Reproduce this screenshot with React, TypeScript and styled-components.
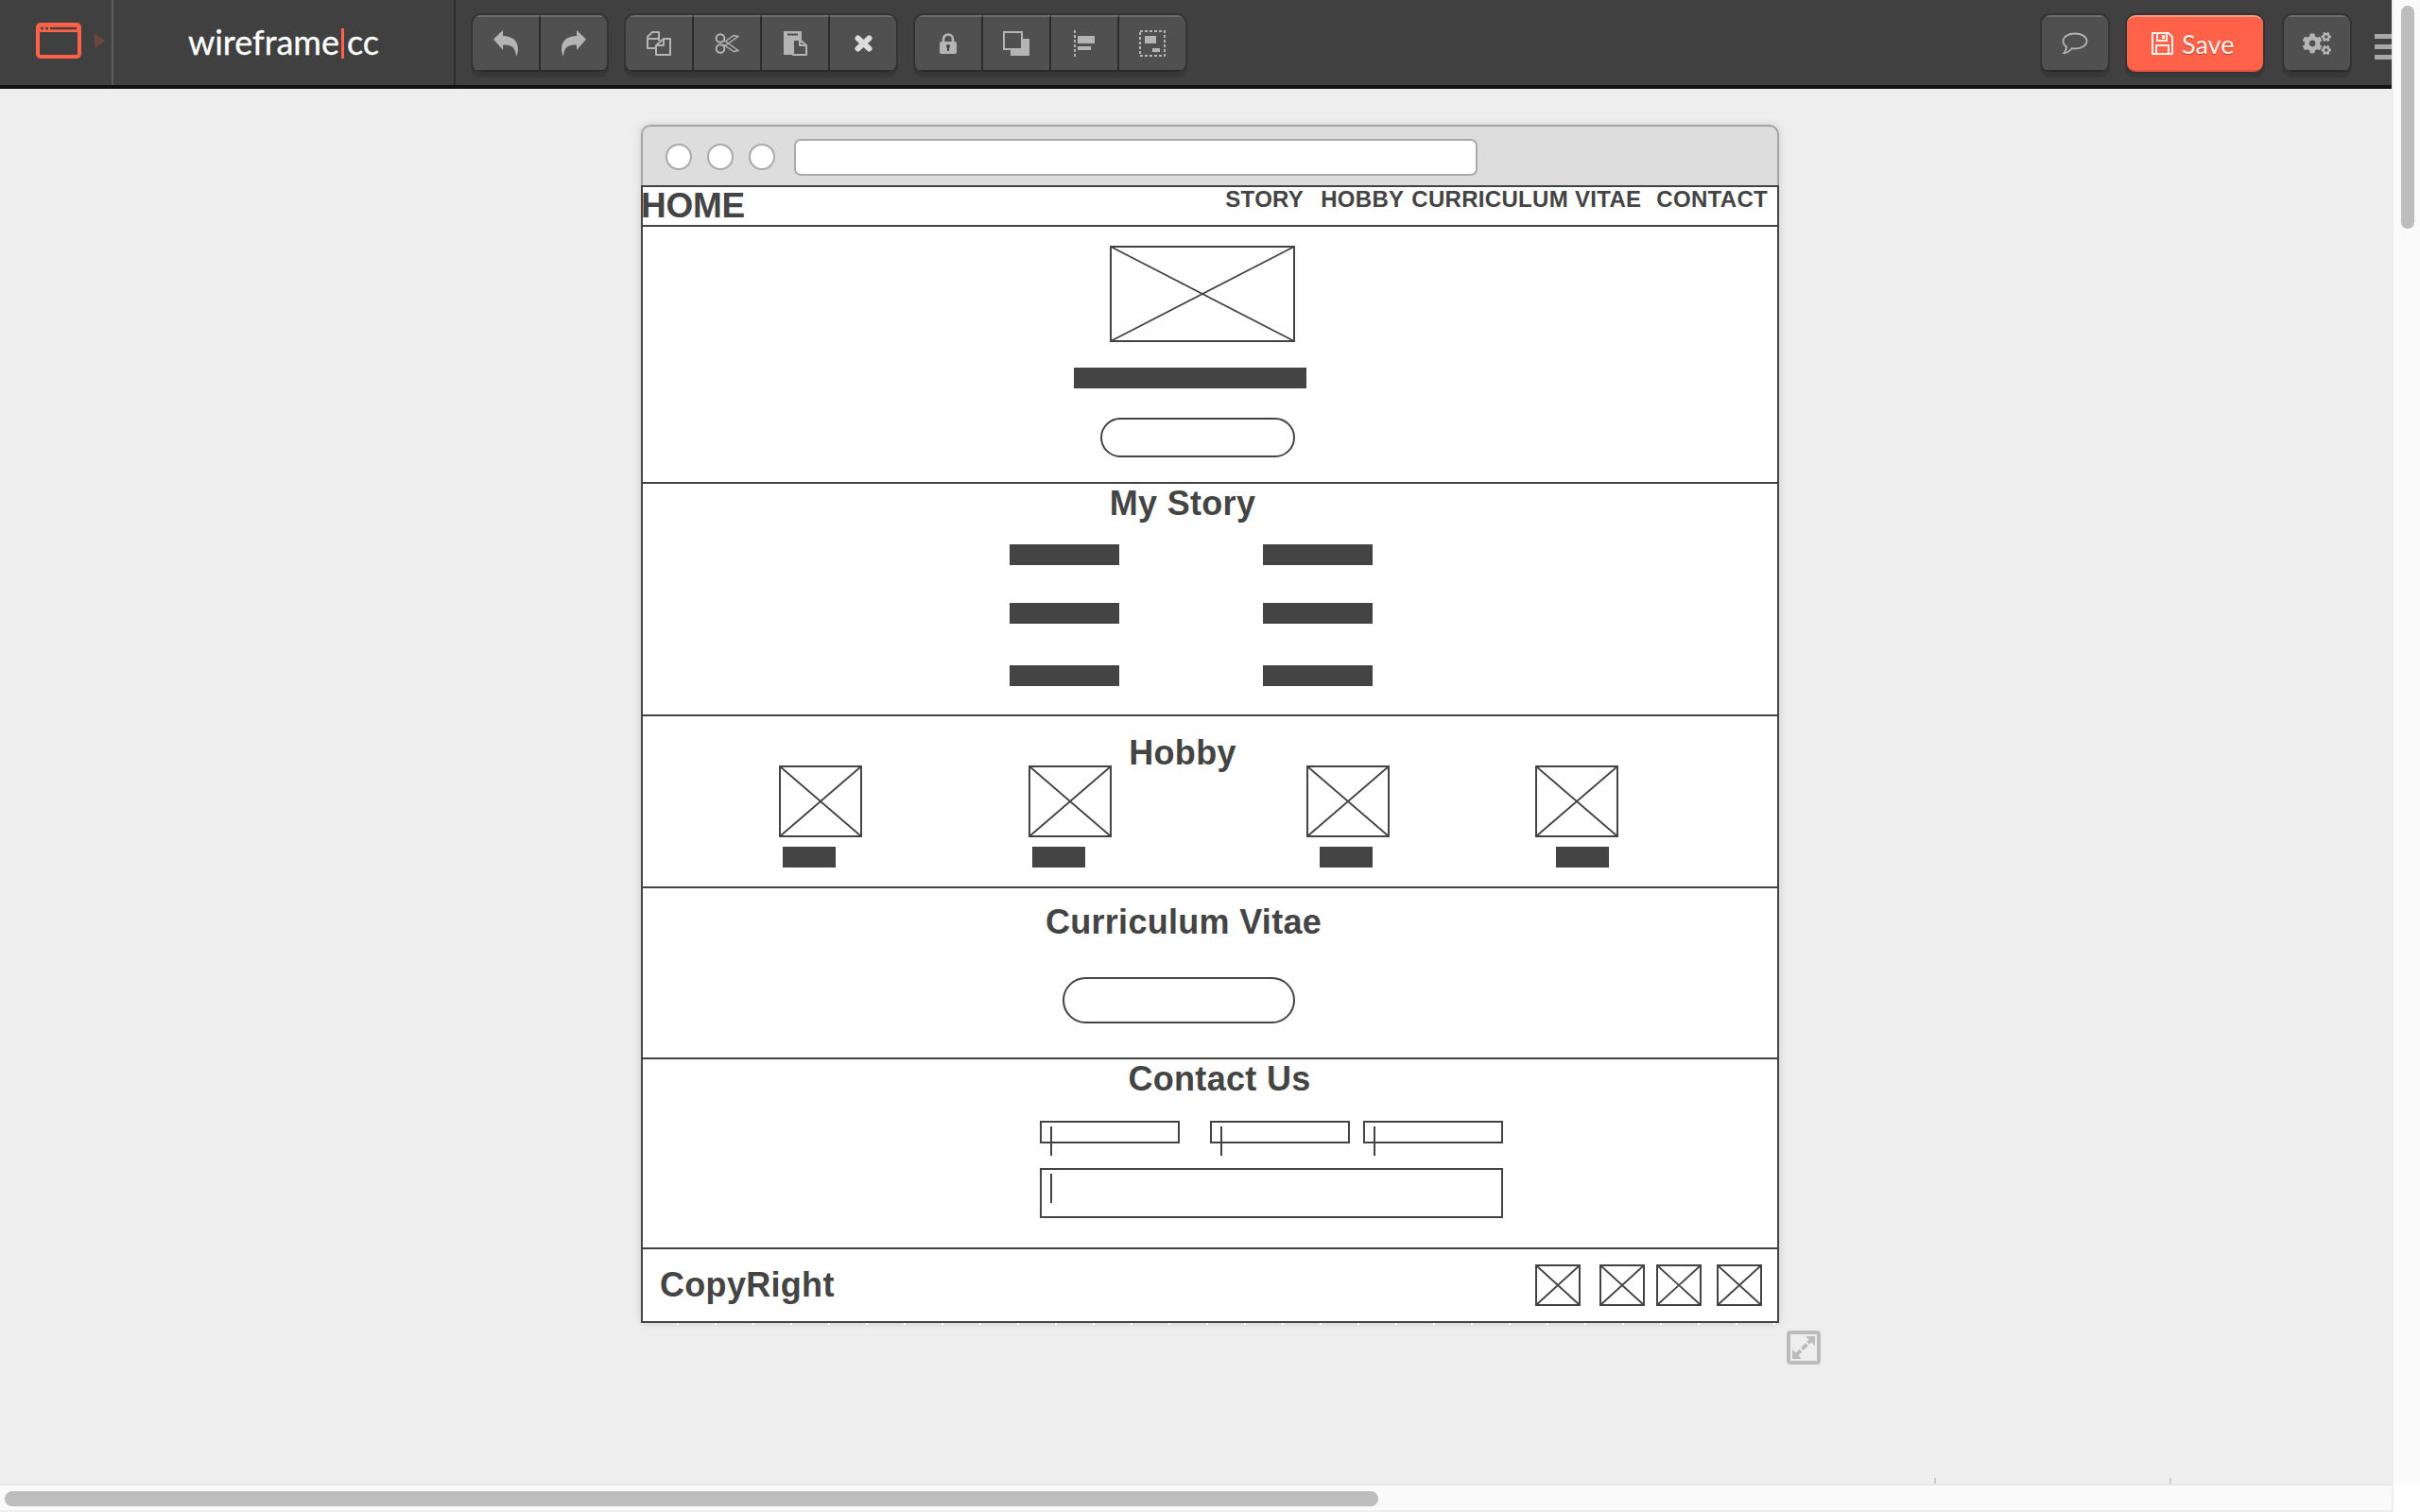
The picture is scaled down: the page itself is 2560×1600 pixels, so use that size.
import React from 'react';
import styled, { createGlobalStyle } from 'styled-components';
import { FaCogs } from 'react-icons/fa';

const INK = '#444';
const SANS = '"Liberation Sans", Arial, sans-serif';

const GlobalStyle = createGlobalStyle`
  html, body {
    margin: 0;
    padding: 0;
    height: 100%;
    overflow: hidden;
    background: #eee;
  }
  * {
    box-sizing: border-box;
  }
`;

const Page = styled.div`
  display: grid;
  grid-template-columns: 2530px 30px;
  width: 2560px;
  height: 1600px;
`;

const Workspace = styled.div`
  display: flex;
  flex-direction: column;
  min-width: 0;
  height: 1600px;
`;

/* ---- top toolbar ---- */
const TopBar = styled.header`
  display: flex;
  align-items: flex-start;
  flex: none;
  height: 94px;
  background: #404040;
  border-bottom: 4px solid #121212;
`;

const AppMenu = styled.div`
  display: flex;
  align-items: center;
  gap: 14px;
  width: 120px;
  height: 90px;
  padding: 0 0 4px 38px;
  border-right: 2px solid #5b5b5b;
`;

const MenuCaret = styled.span`
  width: 0;
  height: 0;
  border-left: 11px solid #6e463c;
  border-top: 8px solid transparent;
  border-bottom: 8px solid transparent;
`;

const LogoBlock = styled.div`
  display: flex;
  align-items: center;
  justify-content: center;
  width: 362px;
  height: 90px;
  padding-bottom: 2px;
  border-right: 2px solid #2c2c2c;
  color: #fff;
  font: 400 36px Lato, sans-serif;
  -webkit-text-stroke: 0.3px #fff;
`;

const LogoPipe = styled.span`
  display: inline-block;
  width: 3px;
  height: 32px;
  margin: 4px 3px 0 2px;
  background: #ff6248;
`;

const ToolGroup = styled.div`
  display: flex;
  height: 60px;
  margin: 16px 0 0 ${(p: { $gap: number }) => p.$gap}px;
  border-radius: 9px;
  box-shadow: 0 0 0 2px #343434, 0 4px 0 2px #383838;
  overflow: hidden;
  flex: none;
`;

const ToolButton = styled.button<{ $width?: number }>`
  display: flex;
  align-items: center;
  justify-content: center;
  width: ${(p) => p.$width ?? 72}px;
  height: 60px;
  padding: 0;
  border: 0;
  border-right: 2px solid #2b2b2b;
  border-top: 2px solid #6d6d6d;
  border-bottom: 2px solid #2a2a2a;
  background: #505050;
  color: #b4b4b4;
  &:last-child {
    border-right: 0;
  }
`;

const Spacer = styled.div`
  flex: 1;
`;

const SaveButton = styled.button`
  display: flex;
  align-items: center;
  gap: 9px;
  flex: none;
  width: 144px;
  height: 60px;
  margin: 16px 0 0 20px;
  padding: 0 0 0 26px;
  border: 0;
  border-top: 2px solid #ff9c88;
  border-bottom: 2px solid #e5533c;
  border-radius: 9px;
  background: #ff6248;
  box-shadow: 0 0 0 2px #343434, 0 4px 0 2px #383838;
  color: #f6f0ee;
  font: 400 27px Lato, sans-serif;
  text-shadow: 0 1px 1px rgba(120, 40, 20, 0.6);
`;

const MenuLines = styled.div`
  display: flex;
  flex-direction: column;
  gap: 6px;
  flex: none;
  width: 18px;
  margin: 36px 0 0 26px;
  & > span {
    height: 5px;
    background: #a8a8a8;
  }
`;

/* ---- canvas ---- */
const Canvas = styled.main`
  position: relative;
  flex: 1;
  padding: 38px 0 0 678px;
  background: #eee;
`;

const BrowserFrame = styled.div`
  position: relative;
  width: 1204px;
  border-radius: 10px 10px 0 0;
  background: #fff;
  box-shadow: 0 0 8px rgba(0, 0, 0, 0.15);
  &::after {
    content: '';
    position: absolute;
    left: 0;
    right: 0;
    bottom: -2px;
    height: 2px;
    background: repeating-linear-gradient(90deg, transparent 0 38px, #fff 38px 40px);
  }
`;

const BrowserChrome = styled.div`
  display: flex;
  align-items: center;
  height: 64px;
  padding: 2px 0 0 24px;
  border: 2px solid #a3a3a3;
  border-bottom: 0;
  border-radius: 10px 10px 0 0;
  background: #ddd;
`;

const ChromeDot = styled.span`
  width: 28px;
  height: 28px;
  margin-right: 16px;
  border: 2px solid #aaa;
  border-radius: 50%;
  background: #fff;
`;

const AddressBar = styled.div`
  width: 723px;
  height: 39px;
  margin-left: 4px;
  border: 2px solid #aaa;
  border-radius: 7px;
  background: #fff;
`;

const Sheet = styled.div`
  border-left: 2px solid ${INK};
  border-right: 2px solid ${INK};
  border-bottom: 2px solid ${INK};
  color: ${INK};
  font-family: ${SANS};
  font-weight: 700;
`;

const NavRow = styled.nav`
  display: flex;
  align-items: flex-start;
  height: 42px;
  border-top: 2px solid ${INK};
`;

const Brand = styled.div`
  margin-left: -2px;
  font-size: 37px;
  line-height: 40px;
  letter-spacing: -0.3px;
`;

const NavLinks = styled.div`
  display: flex;
  margin-left: auto;
  padding: 0 10px 0 0;
  font-size: 24px;
  line-height: 26px;
  letter-spacing: 0.3px;
`;

const NavLink = styled.span<{ $gap: number }>`
  margin-left: ${(p) => p.$gap}px;
`;

const Section = styled.section<{ $height: number }>`
  height: ${(p) => p.$height}px;
  border-top: 2px solid ${INK};
  overflow: hidden;
`;

const SectionTitle = styled.h2<{ $shift: number; $top: number }>`
  height: 10px;
  margin: ${(p) => p.$top}px 0 0;
  font-size: 36px;
  line-height: 10px;
  letter-spacing: 0.3px;
  text-align: center;
  transform: translateX(${(p) => p.$shift}px);
`;

const Placeholder = styled.svg<{ $width: number; $height: number }>`
  display: block;
  flex: none;
  width: ${(p) => p.$width}px;
  height: ${(p) => p.$height}px;
`;

const TextBar = styled.div<{ $width: number; $height?: number }>`
  width: ${(p) => p.$width}px;
  height: ${(p) => p.$height ?? 22}px;
  background: ${INK};
`;

const Pill = styled.div<{ $width: number; $height: number }>`
  width: ${(p) => p.$width}px;
  height: ${(p) => p.$height}px;
  border: 2px solid ${INK};
  border-radius: ${(p) => p.$height / 2}px;
`;

const HeroStack = styled.div`
  display: grid;
  grid-template-columns: 494px 1fr;
  padding-top: 20px;
  grid-row-gap: 27px;
`;

const HeroBar = styled.div`
  grid-column: 1 / 3;
  padding-left: 456px;
`;

const HeroPill = styled.div`
  grid-column: 1 / 3;
  padding: 4px 0 0 484px;
`;

const StoryGrid = styled.div`
  display: grid;
  grid-template-columns: 116px 116px;
  grid-template-rows: 62px 66px 22px;
  grid-column-gap: 152px;
  padding: 38px 0 0 388px;
`;

const HobbyRow = styled.div`
  display: flex;
  padding: 8px 0 0 144px;
`;

const HobbyItem = styled.div<{ $width: number; $inset: number }>`
  width: ${(p) => p.$width}px;
  flex: none;
  & > div {
    margin: 10px 0 0 ${(p) => p.$inset}px;
  }
`;

const PillRow = styled.div<{ $left: number; $top: number }>`
  padding: ${(p) => p.$top}px 0 0 ${(p) => p.$left}px;
`;

const ContactForm = styled.div`
  display: grid;
  grid-template-columns: 148px 148px 148px;
  grid-column-gap: 14px;
  grid-row-gap: 26px;
  justify-content: start;
  padding: 39px 0 0 420px;
`;

const InputBox = styled.div<{ $wide?: boolean; $gapLeft?: number }>`
  position: relative;
  grid-column: ${(p) => (p.$wide ? '1 / 4' : 'auto')};
  width: ${(p) => (p.$wide ? 490 : 148)}px;
  height: ${(p) => (p.$wide ? 53 : 24)}px;
  margin-left: ${(p) => p.$gapLeft ?? 0}px;
  border: 2px solid ${INK};
  &::after {
    content: '';
    position: absolute;
    left: 9px;
    top: 4px;
    width: 2px;
    height: 31px;
    background: ${INK};
  }
`;

const FooterRow = styled.footer`
  display: flex;
  align-items: center;
  height: 78px;
  padding: 0 16px 0 18px;
  border-top: 2px solid ${INK};
`;

const Copyright = styled.div`
  font-size: 36px;
  letter-spacing: 0.3px;
`;

const SocialRow = styled.div`
  display: flex;
  margin-left: auto;
`;

const SocialIcon = styled.div<{ $gap: number }>`
  margin-left: ${(p) => p.$gap}px;
`;

const ResizeHandle = styled.svg`
  position: absolute;
  left: 1890px;
  top: 1314px;
  width: 36px;
  height: 36px;
`;

const RulerTick = styled.span<{ $left: number }>`
  position: absolute;
  left: ${(p) => p.$left}px;
  bottom: 0;
  width: 2px;
  height: 6px;
  background: #ccc;
`;

/* ---- fake scrollbars ---- */
const VerticalTrack = styled.div`
  padding: 6px 6px 0 8px;
  background: linear-gradient(#fafafa 0 1570px, #fff 1570px);
  border-left: 2px solid #eee;
`;

const VerticalThumb = styled.div`
  height: 236px;
  border-radius: 8px;
  background: #bdbdbd;
`;

const HorizontalTrack = styled.div`
  flex: none;
  height: 30px;
  padding: 6px 0 0 5px;
  background: #fafafa;
  border-top: 2px solid #e8e8e8;
  border-bottom: 2px solid #eee;
`;

const HorizontalThumb = styled.div`
  width: 1453px;
  height: 16px;
  border-radius: 8px;
  background: #bdbdbd;
`;

const CrossedBox = ({ width, height }: { width: number; height: number }) => (
  <Placeholder $width={width} $height={height} viewBox={`0 0 ${width} ${height}`}>
    <rect x="1" y="1" width={width - 2} height={height - 2} fill="none" stroke={INK} strokeWidth="2" />
    <path d={`M1 1L${width - 1} ${height - 1}M${width - 1} 1L1 ${height - 1}`} stroke={INK} strokeWidth="1.8" />
  </Placeholder>
);

const Glyph = ({ w, h, children }: { w: number; h: number; children: React.ReactNode }) => (
  <svg width={w} height={h} viewBox={`0 0 ${w} ${h}`} fill="none" stroke="currentColor" strokeWidth="2">
    {children}
  </svg>
);

const WindowLogo = () => (
  <svg width="48" height="38" viewBox="0 0 48 38">
    <rect x="2" y="2" width="44" height="34" rx="3" fill="none" stroke="#ff6248" strokeWidth="4" />
    <rect x="2" y="2" width="44" height="8" fill="#ff6248" />
    <path d="M15 6h28" stroke="#404040" strokeWidth="2.4" />
    <circle cx="6.5" cy="6" r="1.6" fill="#404040" />
    <circle cx="11.5" cy="6" r="1.6" fill="#404040" />
  </svg>
);

const UndoIcon = ({ flip }: { flip?: boolean }) => (
  <svg width="26" height="30" viewBox="0 0 26 30" style={{ transform: flip ? 'scaleX(-1)' : undefined }}>
    <path
      fill="currentColor"
      d="M0 10.5 10 1v6c9 .3 16 4 16 14 0 3-1 6-2 8-.3-5-1.500-9-5-11-2.500-1.400-5-1.500-9-1.500V22z"
    />
  </svg>
);

const CopyIcon = () => (
  <Glyph w={26} h={26}>
    <path d="M6 1h7v7H1V6zM1 8v10h8M13 1v9" strokeLinejoin="round" />
    <path d="M18 8h7v17H10V15z" fill="#505050" strokeLinejoin="round" />
    <path d="M10 15h8V8" strokeLinejoin="round" />
  </Glyph>
);

const ScissorsIcon = () => (
  <Glyph w={26} h={22}>
    <circle cx="6" cy="5.500" r="4.300" />
    <circle cx="6" cy="16.500" r="4.300" />
    <path d="M9.500 7.500 25 18.500l-5 1L9 12M9.500 14.500 25 3.500l-5-1L11 9" strokeLinejoin="round" strokeWidth="1.500" />
  </Glyph>
);

const PasteIcon = () => (
  <svg width="26" height="26" viewBox="0 0 26 26">
    <path d="M1 0h18a1 1 0 0 1 1 1v8h-9v16H1z" fill="currentColor" />
    <path d="M5 3.500h11" stroke="#505050" strokeWidth="2" />
    <path d="M18 9h-7v16h14V15l-7-6v6h7" fill="none" stroke="currentColor" strokeWidth="2" strokeLinejoin="round" />
  </svg>
);

const CloseIcon = () => (
  <svg width="19" height="18" viewBox="0 0 19 18">
    <path d="M3.500 3.500l12 11M15.500 3.500l-12 11" stroke="#dcdcdc" strokeWidth="6" strokeLinecap="round" />
  </svg>
);

const LockIcon = () => (
  <svg width="18" height="22" viewBox="0 0 18 22">
    <path d="M4 10V6.500a5 5 0 0 1 10 0V10" fill="none" stroke="currentColor" strokeWidth="2.600" />
    <rect y="9" width="18" height="13" rx="2" fill="currentColor" />
    <circle cx="9" cy="14" r="2" fill="#404040" />
    <rect x="8" y="14" width="2" height="5" fill="#404040" />
  </svg>
);

const OverlapIcon = () => (
  <svg width="28" height="26" viewBox="0 0 28 26">
    <rect x="8" y="8" width="20" height="18" fill="currentColor" />
    <rect x="1" y="1" width="19" height="18" fill="#505050" stroke="currentColor" strokeWidth="2" />
  </svg>
);

const AlignIcon = () => (
  <svg width="22" height="28" viewBox="0 0 22 28">
    <path d="M1 0v28" stroke="currentColor" strokeWidth="2" strokeDasharray="3 2" />
    <rect x="4" y="6" width="18" height="8" fill="currentColor" />
    <rect x="4" y="17" width="14" height="4" fill="currentColor" />
  </svg>
);

const GroupIcon = () => (
  <svg width="28" height="28" viewBox="0 0 28 28">
    <rect x="1" y="1" width="26" height="26" fill="none" stroke="currentColor" strokeWidth="2" strokeDasharray="3 2" />
    <rect x="6" y="6" width="12" height="8" fill="currentColor" />
    <rect x="14" y="19" width="8" height="4" fill="currentColor" />
  </svg>
);

const CommentIcon = () => (
  <svg width="28" height="24" viewBox="0 0 28 24" fill="none" stroke="currentColor" strokeWidth="1.800">
    <path d="M14 1.500c7 0 12.500 3.500 12.500 8s-5.500 8-12.500 8c-1.200 0-2.300-.1-3.400-.3C8.500 19.800 5.500 22 2.500 22c1.300-1.500 2.300-3.500 2.600-6.300C2.900 14.200 1.500 12 1.500 9.500c0-4.500 5.500-8 12.500-8z" />
  </svg>
);

const FloppyIcon = () => (
  <svg width="23" height="24" viewBox="0 0 23 24" fill="none" stroke="#f6f0ee" strokeWidth="2">
    <path d="M1 1h17l4 4v18H1z" strokeLinejoin="round" />
    <path d="M6 1v8h10V1M5 23v-9h13v9" />
    <rect x="11" y="3" width="3" height="4" fill="#f6f0ee" stroke="none" />
  </svg>
);

export default function App() {
  return (
    <>
      <GlobalStyle />
      <Page>
        <Workspace>
          <TopBar>
            <AppMenu>
              <WindowLogo />
              <MenuCaret />
            </AppMenu>
            <LogoBlock>
              wireframe<LogoPipe />cc
            </LogoBlock>
            <ToolGroup $gap={18}>
              <ToolButton><UndoIcon /></ToolButton>
              <ToolButton $width={70}><UndoIcon flip /></ToolButton>
            </ToolGroup>
            <ToolGroup $gap={20}>
              <ToolButton><CopyIcon /></ToolButton>
              <ToolButton><ScissorsIcon /></ToolButton>
              <ToolButton><PasteIcon /></ToolButton>
              <ToolButton $width={70}><CloseIcon /></ToolButton>
            </ToolGroup>
            <ToolGroup $gap={20}>
              <ToolButton><LockIcon /></ToolButton>
              <ToolButton><OverlapIcon /></ToolButton>
              <ToolButton><AlignIcon /></ToolButton>
              <ToolButton $width={70}><GroupIcon /></ToolButton>
            </ToolGroup>
            <Spacer />
            <ToolGroup $gap={0}>
              <ToolButton $width={70}><CommentIcon /></ToolButton>
            </ToolGroup>
            <SaveButton>
              <FloppyIcon />
              Save
            </SaveButton>
            <ToolGroup $gap={22}>
              <ToolButton $width={70}><FaCogs size={30} /></ToolButton>
            </ToolGroup>
            <MenuLines>
              <span />
              <span />
              <span />
            </MenuLines>
          </TopBar>
          <Canvas>
            <BrowserFrame>
              <BrowserChrome>
                <ChromeDot />
                <ChromeDot />
                <ChromeDot />
                <AddressBar />
              </BrowserChrome>
              <Sheet>
                <NavRow>
                  <Brand>HOME</Brand>
                  <NavLinks>
                    <NavLink $gap={0}>STORY</NavLink>
                    <NavLink $gap={18}>HOBBY</NavLink>
                    <NavLink $gap={8}>CURRICULUM VITAE</NavLink>
                    <NavLink $gap={16}>CONTACT</NavLink>
                  </NavLinks>
                </NavRow>
                <Section $height={272}>
                  <HeroStack>
                    <div />
                    <CrossedBox width={196} height={102} />
                    <HeroBar><TextBar $width={246} /></HeroBar>
                    <HeroPill><Pill $width={206} $height={42} /></HeroPill>
                  </HeroStack>
                </Section>
                <Section $height={246}>
                  <SectionTitle $shift={-29} $top={16}>My Story</SectionTitle>
                  <StoryGrid>
                    <TextBar $width={116} />
                    <TextBar $width={116} />
                    <TextBar $width={116} />
                    <TextBar $width={116} />
                    <TextBar $width={116} />
                    <TextBar $width={116} />
                  </StoryGrid>
                </Section>
                <Section $height={182}>
                  <SectionTitle $shift={-29} $top={34}>Hobby</SectionTitle>
                  <HobbyRow>
                    <HobbyItem $width={264} $inset={4}>
                      <CrossedBox width={88} height={76} />
                      <TextBar $width={56} />
                    </HobbyItem>
                    <HobbyItem $width={294} $inset={4}>
                      <CrossedBox width={88} height={76} />
                      <TextBar $width={56} />
                    </HobbyItem>
                    <HobbyItem $width={242} $inset={14}>
                      <CrossedBox width={88} height={76} />
                      <TextBar $width={56} />
                    </HobbyItem>
                    <HobbyItem $width={88} $inset={22}>
                      <CrossedBox width={88} height={76} />
                      <TextBar $width={56} />
                    </HobbyItem>
                  </HobbyRow>
                </Section>
                <Section $height={181}>
                  <SectionTitle $shift={-28} $top={31}>Curriculum Vitae</SectionTitle>
                  <PillRow $left={444} $top={53}>
                    <Pill $width={246} $height={49} />
                  </PillRow>
                </Section>
                <Section $height={201}>
                  <SectionTitle $shift={10} $top={16}>Contact Us</SectionTitle>
                  <ContactForm>
                    <InputBox />
                    <InputBox $gapLeft={18} />
                    <InputBox $gapLeft={18} />
                    <InputBox $wide />
                  </ContactForm>
                </Section>
                <FooterRow>
                  <Copyright>CopyRight</Copyright>
                  <SocialRow>
                    <SocialIcon $gap={0}><CrossedBox width={48} height={44} /></SocialIcon>
                    <SocialIcon $gap={20}><CrossedBox width={48} height={44} /></SocialIcon>
                    <SocialIcon $gap={12}><CrossedBox width={48} height={44} /></SocialIcon>
                    <SocialIcon $gap={16}><CrossedBox width={48} height={44} /></SocialIcon>
                  </SocialRow>
                </FooterRow>
              </Sheet>
            </BrowserFrame>
            <ResizeHandle viewBox="0 0 36 36">
              <rect x="2" y="2" width="32" height="32" rx="2" fill="none" stroke="#bbb" strokeWidth="4" />
              <path d="M10 26 26 10" stroke="#bbb" strokeWidth="4" strokeDasharray="7 2" />
              <path d="M6 30v-10l10 10zM30 6v10L20 6z" fill="#bbb" />
            </ResizeHandle>
            <RulerTick $left={2046} />
            <RulerTick $left={2295} />
          </Canvas>
          <HorizontalTrack>
            <HorizontalThumb />
          </HorizontalTrack>
        </Workspace>
        <VerticalTrack>
          <VerticalThumb />
        </VerticalTrack>
      </Page>
    </>
  );
}
